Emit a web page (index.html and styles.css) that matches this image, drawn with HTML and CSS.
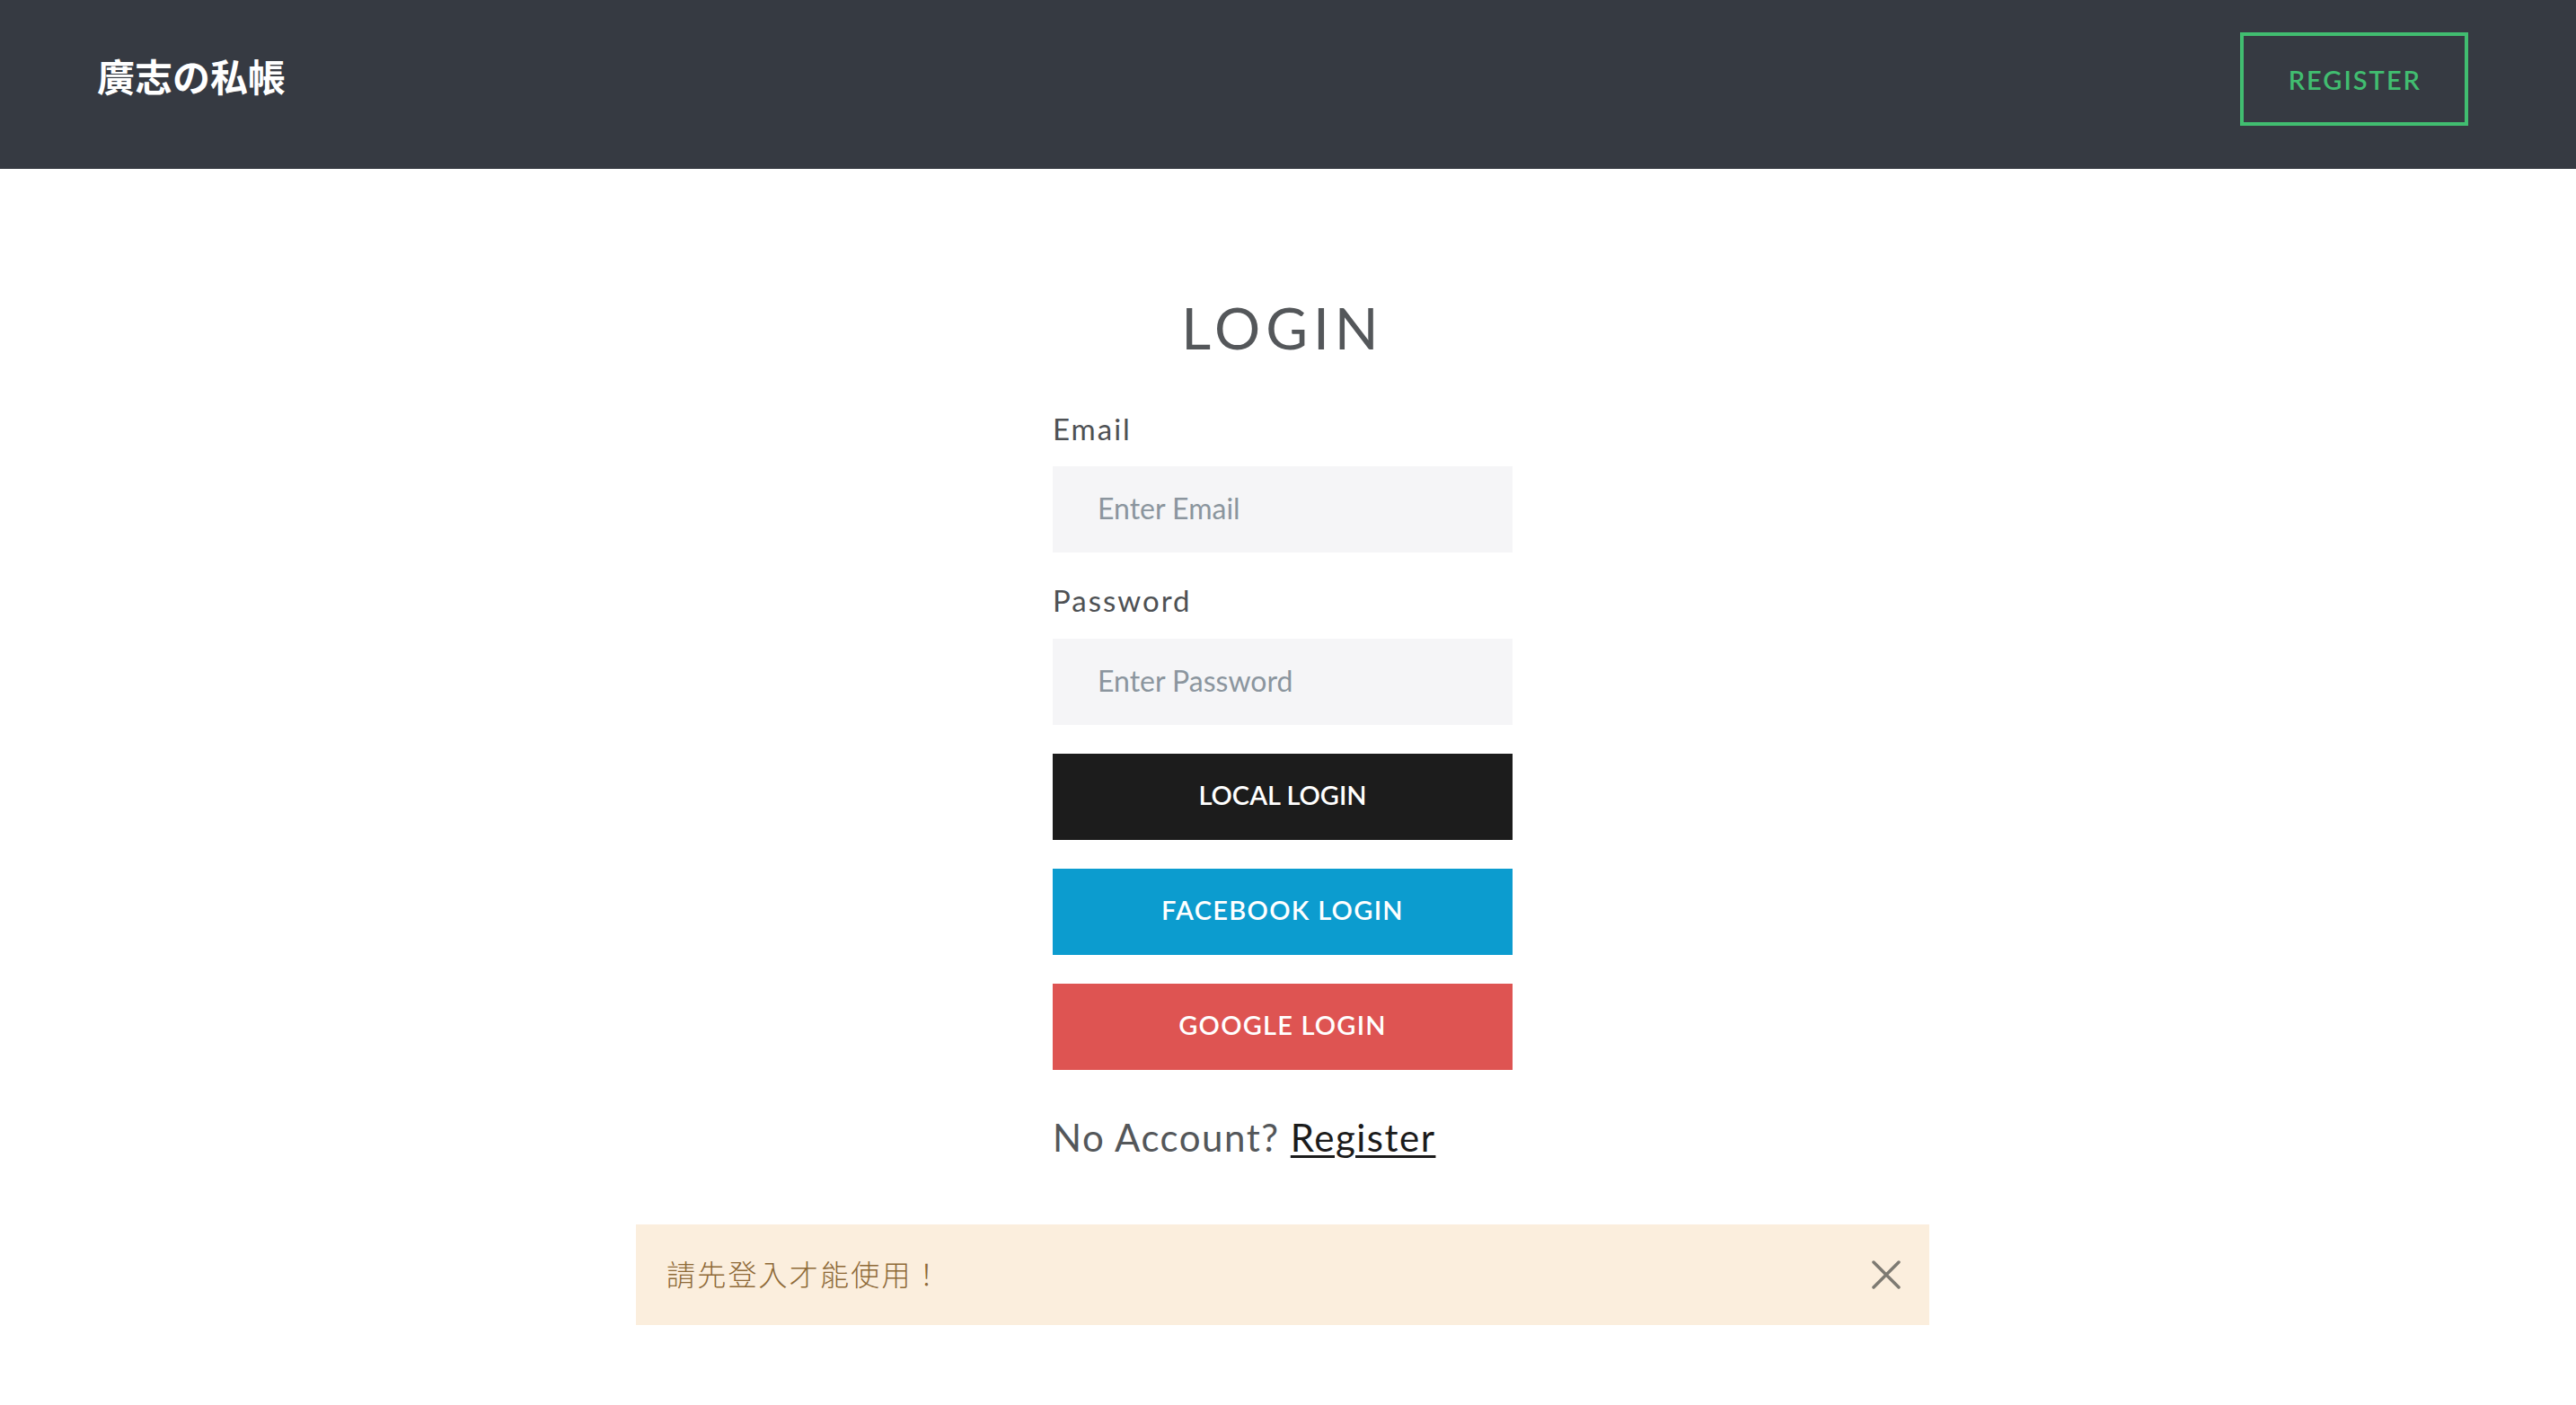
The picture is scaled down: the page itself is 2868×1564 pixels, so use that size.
FILE: index.html
```html
<!DOCTYPE html>
<html lang="zh-Hant">
<head>
<meta charset="utf-8">
<title>Login</title>
<link rel="stylesheet" href="styles.css">
</head>
<body>
<header class="topbar">
  <a class="brand" href="#">廣志の私帳</a>
  <a class="btn-register" href="#">REGISTER</a>
</header>
<main class="main">
  <form class="login-form">
    <h1 class="title">LOGIN</h1>
    <div class="field">
      <label class="label" for="email">Email</label>
      <input class="input" id="email" type="text" placeholder="Enter Email">
    </div>
    <div class="field">
      <label class="label" for="password">Password</label>
      <input class="input" id="password" type="password" placeholder="Enter Password">
    </div>
    <div class="actions">
      <button class="btn btn-local" type="button">LOCAL LOGIN</button>
      <button class="btn btn-facebook" type="button">FACEBOOK LOGIN</button>
      <button class="btn btn-google" type="button">GOOGLE LOGIN</button>
    </div>
    <p class="no-account">No Account? <a href="#">Register</a></p>
  </form>
  <div class="alert">
    <span class="alert-text">請先登入才能使用！</span>
    <button class="alert-close" type="button" aria-label="close">
      <svg width="32" height="32" viewBox="0 0 32 32"><path d="M2 2 L30 30 M30 2 L2 30" stroke="#7d7a72" stroke-width="3.5" stroke-linecap="round" fill="none"/></svg>
    </button>
  </div>
</main>
</body>
</html>
```
FILE: styles.css
```css
* { box-sizing: border-box; }
html, body { margin: 0; padding: 0; background: #ffffff; }
body {
  font-family: "Lato", "Noto Sans", "Noto Sans CJK TC", sans-serif;
  color: #54575a;
}
.topbar {
  height: 188px;
  background: #363a42;
  display: flex;
  align-items: center;
  justify-content: space-between;
  padding: 0 120px 0 108px;
}
.brand {
  font-family: "Noto Sans CJK TC", sans-serif;
  font-weight: 700;
  font-size: 42px;
  color: #ffffff;
  text-decoration: none;
  line-height: 1;
  margin-top: -20px;
}
.btn-register {
  display: inline-flex;
  align-items: center;
  justify-content: center;
  height: 104px;
  padding: 0 48px 0 50px;
  border: 4px solid #41bd70;
  color: #41bd70;
  font-size: 29px;
  font-weight: 600;
  letter-spacing: 2px;
  text-decoration: none;
  margin-top: -12px;
}
.main {
  display: flex;
  flex-direction: column;
  align-items: center;
  padding: 139px 12px 80px 0;
}
.login-form {
  width: 512px;
  display: flex;
  flex-direction: column;
}
.title {
  margin: 0 0 54px;
  font-size: 64px;
  line-height: 1.2;
  font-weight: 400;
  letter-spacing: 6px;
  text-align: center;
  color: #54575a;
}
.field {
  display: flex;
  flex-direction: column;
  margin-bottom: 34px;
}
.label {
  font-size: 33px;
  line-height: 1.2;
  letter-spacing: 2px;
  color: #4e5154;
  margin-bottom: 22px;
}
.input {
  height: 96px;
  width: 100%;
  border: none;
  outline: none;
  background: #f5f5f7;
  padding: 0 50px 3px;
  font-family: inherit;
  font-size: 32px;
  color: #54575a;
}
.input::placeholder { color: #8b959e; }
.actions {
  display: flex;
  flex-direction: column;
  gap: 32px;
  margin-top: -2px;
}
.btn {
  height: 96px;
  width: 100%;
  border: none;
  color: #ffffff;
  font-family: inherit;
  font-size: 29px;
  font-weight: 600;
  cursor: pointer;
  padding: 0 0 4px;
}
.btn-local { background: #1c1c1c; }
.btn-facebook { background: #0c9ccf; letter-spacing: 1.3px; }
.btn-google { background: #de5452; letter-spacing: 1.2px; }
.no-account {
  margin: 50px 0 0;
  font-size: 42px;
  line-height: 1.2;
  letter-spacing: 1.5px;
  color: #54575a;
}
.no-account a { color: #1b1b1b; text-decoration: underline; text-underline-offset: 4px; text-decoration-thickness: 3px; }
.alert {
  width: 1440px;
  height: 112px;
  margin-top: 72px;
  background: #fbeedd;
  display: flex;
  align-items: center;
  justify-content: space-between;
  padding: 0 32px 0 34px;
}
.alert-text {
  font-family: "Noto Sans CJK TC", sans-serif;
  font-size: 32px;
  letter-spacing: 2.2px;
  color: #8e6a38;
  font-weight: 300;
  margin-top: -5px;
}
.alert-close {
  background: none;
  border: none;
  padding: 0;
  width: 32px;
  height: 32px;
  display: flex;
  cursor: pointer;
}
```
